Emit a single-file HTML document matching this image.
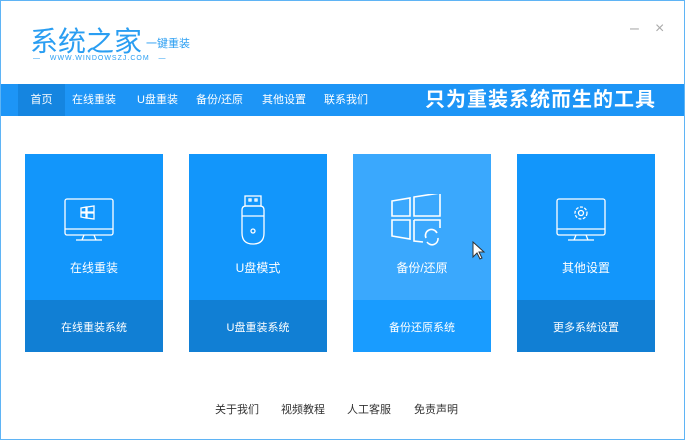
<!DOCTYPE html>
<html><head><meta charset="utf-8"><style>
*{margin:0;padding:0;box-sizing:border-box}
body{width:685px;height:440px;background:#fff;font-family:"Liberation Sans","Noto Sans CJK SC",sans-serif;position:relative;overflow:hidden}
.frame{position:absolute;left:0;top:0;width:685px;height:440px;border:1px solid #5fb4f5}
.logo{position:absolute;left:30px;top:20px;font-size:28px;color:#2a9ef2;letter-spacing:0px}
.sub{position:absolute;left:146px;top:35px;font-size:11px;color:#2a9ef2}
.url{position:absolute;left:33px;top:55px;font-size:7px;color:#2a9ef2;letter-spacing:1px}
.ctl{position:absolute;top:20px;color:#aaa;font-size:16px}
.nav{position:absolute;left:1px;top:84px;width:683px;height:32px;background:#1d95f6}
.nav span{position:absolute;top:0;line-height:32px;font-size:11px;color:#fff}
.nav .act{background:#1585e0;left:17px;width:47px;text-align:center}
.slogan{position:absolute;right:28px;top:0;line-height:32px;font-size:20px;color:#fff;font-weight:bold;letter-spacing:1px}
.card{position:absolute;top:154px;width:138px;height:198px;background:#1296fb;color:#fff;text-align:center}
.card .b{position:absolute;left:0;bottom:0;width:100%;height:52px;background:#117fd4;line-height:56px;font-size:11px}
.card .t{position:absolute;top:105px;width:100%;font-size:12px}
.card svg{position:absolute;left:39px;top:40px}
.card.h{background:#3aa8fd}.card.h .b{background:#199cff}
.foot{position:absolute;top:401px;font-size:11px;color:#333}
</style></head><body>
<div class="frame"></div>
<div class="logo">系统之家</div>
<div class="sub">一键重装</div>
<div class="url">—&nbsp;&nbsp;&nbsp;WWW.WINDOWSZJ.COM&nbsp;&nbsp;&nbsp;—</div>
<div class="ctl" style="left:630px">–</div>
<div class="ctl" style="left:655px">×</div>
<div class="nav">
<span class="act">首页</span>
<span style="left:71px">在线重装</span>
<span style="left:136px">U盘重装</span>
<span style="left:195px">备份/还原</span>
<span style="left:261px">其他设置</span>
<span style="left:323px">联系我们</span>
<div class="slogan">只为重装系统而生的工具</div>
</div>
<div class="card" style="left:25px">
<svg width="60" height="50" viewBox="0 0 60 50" fill="none" stroke="#fff" stroke-width="1.3"><rect x="1" y="5" width="48" height="36" rx="2"/><line x1="1" y1="35" x2="49" y2="35"/><path d="M20 41l-2 5h14l-2-5M12 46h26"/><path d="M17 14l5-1v5h-5zM23 13l7-1v6h-7zM17 19h5v5l-5-1zM23 19h7v6l-7-1z"/></svg>
<div class="t">在线重装</div><div class="b">在线重装系统</div></div>
<div class="card" style="left:189px">
<svg width="60" height="52" viewBox="0 0 60 52" fill="none" stroke="#fff" stroke-width="1.3" style="top:40px"><rect x="17" y="2" width="16" height="10"/><rect x="21" y="5" width="2" height="2"/><rect x="27" y="5" width="2" height="2"/><path d="M14 16q0-4 4-4h14q4 0 4 4v23q0 11-11 11t-11-11z"/><path d="M14 22h22"/><circle cx="25" cy="37" r="2"/></svg>
<div class="t">U盘模式</div><div class="b">U盘重装系统</div></div>
<div class="card h" style="left:353px">
<svg width="56" height="54" viewBox="0 0 56 54" fill="none" stroke="#fff" stroke-width="1.6" style="left:38px;top:40px"><path d="M1 7l18-3v18H1zM23 3l26-4v23H23zM1 26h18v19L1 42zM23 26h26v8M23 26v21l9 1"/><path d="M35 44a6 6 0 0 1 11-5M47 44a6 6 0 0 1-11 4"/></svg>
<div class="t">备份/还原</div><div class="b">备份还原系统</div></div>
<div class="card" style="left:517px">
<svg width="60" height="50" viewBox="0 0 60 50" fill="none" stroke="#fff" stroke-width="1.3"><rect x="1" y="5" width="48" height="36" rx="2"/><line x1="1" y1="35" x2="49" y2="35"/><path d="M20 41l-2 5h14l-2-5M12 46h26"/><circle cx="25" cy="19" r="6" stroke-dasharray="3 1.5"/><circle cx="25" cy="19" r="2.5"/></svg>
<div class="t">其他设置</div><div class="b">更多系统设置</div></div>
<svg style="position:absolute;left:472px;top:241px" width="14" height="20" viewBox="0 0 14 20"><path d="M1 1v15l4-4 3 6 2-1-3-6h5z" fill="#fff" stroke="#333" stroke-width="1"/></svg>
<div class="foot" style="left:215px">关于我们</div>
<div class="foot" style="left:281px">视频教程</div>
<div class="foot" style="left:347px">人工客服</div>
<div class="foot" style="left:414px">免责声明</div>
</body></html>
